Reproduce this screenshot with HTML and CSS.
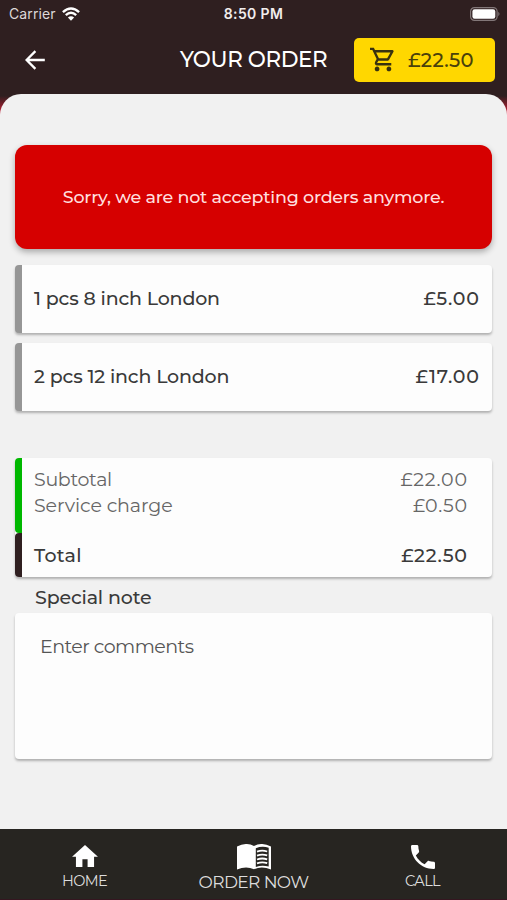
FILE: index.html
```
<!DOCTYPE html>
<html lang="en">
<head>
<meta charset="utf-8">
<title>Your order</title>
<link rel="stylesheet" href="styles.css">
</head>
<body>
<div class="app">
  <header class="header">
    <div class="status">
      <div class="carrier">
        <span class="carrier-name">Carrier</span>
        <svg class="wifi" viewBox="0 0 18 14" fill="none" stroke="#fff" stroke-width="2.4"><path d="M.9 5.1Q9-2.3 17.1 5.1"/><path d="M3.8 8.1Q9 3.4 14.2 8.1"/><path d="M9 13.8 5.9 10.6Q9 8 12.1 10.6Z" fill="#fff" stroke="none"/></svg>
      </div>
      <span class="clock">8:50 PM</span>
      <svg class="battery" viewBox="0 0 30 14"><rect x=".6" y=".6" width="26.5" height="12.8" rx="3.8" fill="none" stroke="#827778" stroke-width="1.2"/><rect x="2.4" y="2.3" width="22.9" height="9.4" rx="2.2" fill="#fff"/><path d="M28.3 4.8Q30.7 7 28.3 9.2Z" fill="#827778"/></svg>
    </div>
    <div class="bar">
      <svg class="back" viewBox="0 0 20 20" fill="none" stroke="#fff" stroke-width="2.3"><path d="M19.8 10H1.8M10.4 1.1 1.6 10l8.8 8.900"/></svg>
      <h1 class="title">YOUR ORDER</h1>
      <div class="cart">
        <svg class="cart-icon" viewBox="1 2 22 20" fill="#38320f"><path d="M15.55 13c.75 0 1.41-.41 1.75-1.03l3.58-6.49A.996.996 0 0 0 20.01 4H5.21l-.94-2H1v2h2l3.6 7.59-1.35 2.44C4.52 15.37 5.48 17 7 17h12v-2H7l1.1-2h7.45zM6.16 6h12.15l-2.76 5H8.53L6.16 6zM7 18c-1.1 0-1.99.9-1.99 2S5.9 22 7 22s2-.9 2-2-.9-2-2-2zm10 0c-1.1 0-1.99.9-1.99 2s.89 2 1.99 2 2-.9 2-2-.9-2-2-2z"/></svg>
        <span class="cart-total">£22.50</span>
      </div>
    </div>
  </header>
  <div class="backdrop">
    <main class="sheet">
      <div class="alert"><span class="alert-text">Sorry, we are not accepting orders anymore.</span></div>
      <div class="card item"><span class="item-name">1 pcs 8 inch London</span><span class="item-price">£5.00</span></div>
      <div class="card item"><span class="item-name">2 pcs 12 inch London</span><span class="item-price">£17.00</span></div>
      <section class="card totals">
        <div class="charges">
          <div class="row"><span class="subtotal">Subtotal</span><span class="amount">£22.00</span></div>
          <div class="row"><span class="service">Service charge</span><span class="amount">£0.50</span></div>
        </div>
        <div class="row grand"><span class="total">Total</span><span class="amount">£22.50</span></div>
      </section>
      <h2 class="note-title">Special note</h2>
      <div class="card note"><span class="placeholder">Enter comments</span></div>
    </main>
  </div>
  <nav class="nav">
    <div class="tab">
      <svg class="home-icon" viewBox="2 3 20 17" fill="#fff"><path d="M10 20v-6h4v6h5v-8h3L12 3 2 12h3v8z"/></svg>
      <span>HOME</span>
    </div>
    <div class="tab order">
      <svg class="book-icon" viewBox="0 0 34 26"><path d="M0 2.5Q9-2.2 17 1.9 25-2.2 34 2.5V25.6Q25 21.7 17 25.3 9 21.7 0 25.6Z" fill="#fff"/><path d="M18.8 4.2Q25 1.6 31.7 3.7V22.6Q25 20.8 18.8 23Z" fill="#272521"/><path d="M20 7.7Q25 5.8 30.2 7.5M20 11.6Q25 9.7 30.2 11.4M20 15.5Q25 13.6 30.2 15.3M20 19.4Q25 17.5 30.2 19.2" fill="none" stroke="#fff" stroke-width="1.8"/></svg>
      <span>ORDER NOW</span>
    </div>
    <div class="tab">
      <svg class="call-icon" viewBox="3 3 18 18" fill="#fff"><path d="M6.62 10.79c1.44 2.83 3.76 5.14 6.59 6.59l2.2-2.2c.27-.27.67-.36 1.02-.24 1.12.37 2.33.57 3.57.57.55 0 1 .45 1 1V20c0 .55-.45 1-1 1-9.39 0-17-7.61-17-17 0-.55.45-1 1-1h3.5c.55 0 1 .45 1 1 0 1.25.2 2.45.57 3.57.11.35.03.74-.25 1.02l-2.2 2.2z"/></svg>
      <span>CALL</span>
    </div>
  </nav>
</div>
</body>
</html>
```
FILE: styles.css
```
* { box-sizing: border-box; }
body { margin: 0; font-family: Montserrat, Inter, sans-serif; font-size: 19px; color: #3a3a3a; }
svg { display: block; flex: none; }
.app { display: flex; flex-direction: column; width: 507px; height: 900px; overflow: hidden; background: #f1f1f1; }

.header { flex: none; height: 93px; background: #2f1f20; color: #fff; }
.status { display: grid; grid-template-columns: 1fr auto 1fr; align-items: center; height: 27px; padding: 0 7px 0 9px; font-family: Inter, sans-serif; }
.carrier { display: flex; align-items: center; gap: 6px; }
.carrier-name { font-size: 14px; color: #ddd8d8; letter-spacing: .1px; }
.wifi { width: 18px; height: 14px; }
.clock { font-weight: 600; font-size: 14px; letter-spacing: .35px; color: #f1eded; margin-right: 2px; }
.battery { width: 30px; height: 14px; justify-self: end; }
.bar { display: flex; align-items: center; height: 64px; padding: 1px 12px 0 25px; }
.back { width: 20px; height: 20px; }
.title { margin: 0 0 2px 135px; width: 174px; font-size: 21.5px; font-weight: 500; letter-spacing: -.4px; white-space: nowrap; }
.cart { display: flex; align-items: center; flex: none; width: 141px; height: 44px; padding-left: 16px; gap: 12px; border-radius: 5px; background: #ffd700; color: #4a410b; }
.cart-icon { width: 26px; height: 25px; }
.cart-total { font-size: 19.5px; font-weight: 500; letter-spacing: .4px; }

.backdrop { flex: none; height: 736px; padding-top: 1px; background: linear-gradient(#2f1f20 0, #2f1f20 3px, #b51c31 18px, #f1f1f1 30px); }
.sheet { height: 735px; padding: 51px 15px 0; border-radius: 21px 21px 0 0; background: #f1f1f1; }
.alert { display: flex; align-items: center; justify-content: center; height: 104px; margin-bottom: 16px; padding-bottom: 2px; border-radius: 12px; background: #d60000; color: #ffdede; box-shadow: 0 3px 6px rgba(0, 0, 0, .3); }
.alert-text { font-size: 17.5px; font-weight: 500; letter-spacing: -.22px; white-space: nowrap; }
.card { border-radius: 4px; background: #fdfdfd; box-shadow: 0 2px 2.5px rgba(0, 0, 0, .27); }
.item { display: flex; align-items: center; justify-content: space-between; height: 68px; margin-bottom: 10px; padding: 0 13px 2px; border-left: 7px solid #969696; padding-left: 12px; font-weight: 500; }
.item-name { letter-spacing: -.17px; }
.item-price { letter-spacing: .8px; margin-right: -.8px; }
.totals { margin-top: 47px; height: 119px; }
.row { display: flex; justify-content: space-between; align-items: center; height: 26px; padding: 0 25px 0 12px; }
.charges { height: 75px; padding-top: 8px; border-left: 7px solid #00b800; border-radius: 4px 0 0 4px; color: #666; }
.subtotal { letter-spacing: -.3px; }
.service { letter-spacing: -.1px; }
.total { letter-spacing: .3px; }
.amount { letter-spacing: .75px; margin-right: -.75px; }
.grand { height: 44px; border-left: 7px solid #2f1f20; border-radius: 4px 0 0 4px; font-weight: 500; }
.note-title { margin: 0 0 0 20px; height: 36px; font-size: 19px; font-weight: 500; line-height: 42px; letter-spacing: -.15px; }
.note { height: 146px; padding: 22px 25px; }
.placeholder { color: #555; letter-spacing: -.55px; }

.nav { flex: none; display: grid; grid-template-columns: repeat(3, 1fr); height: 71px; border-bottom: 1px solid #351620; background: #272521; color: #ddd; font-size: 14.5px; }
.tab { display: flex; flex-direction: column; align-items: center; padding-top: 16px; line-height: 18px; }
.tab span { white-space: nowrap; letter-spacing: -.6px; }
.home-icon { width: 26px; height: 22px; margin-bottom: 5px; }
.order { padding-top: 15px; font-size: 17px; }
.book-icon { width: 34px; height: 26px; margin-bottom: 3px; }
.call-icon { width: 24px; height: 24px; margin-bottom: 3px; }
```
